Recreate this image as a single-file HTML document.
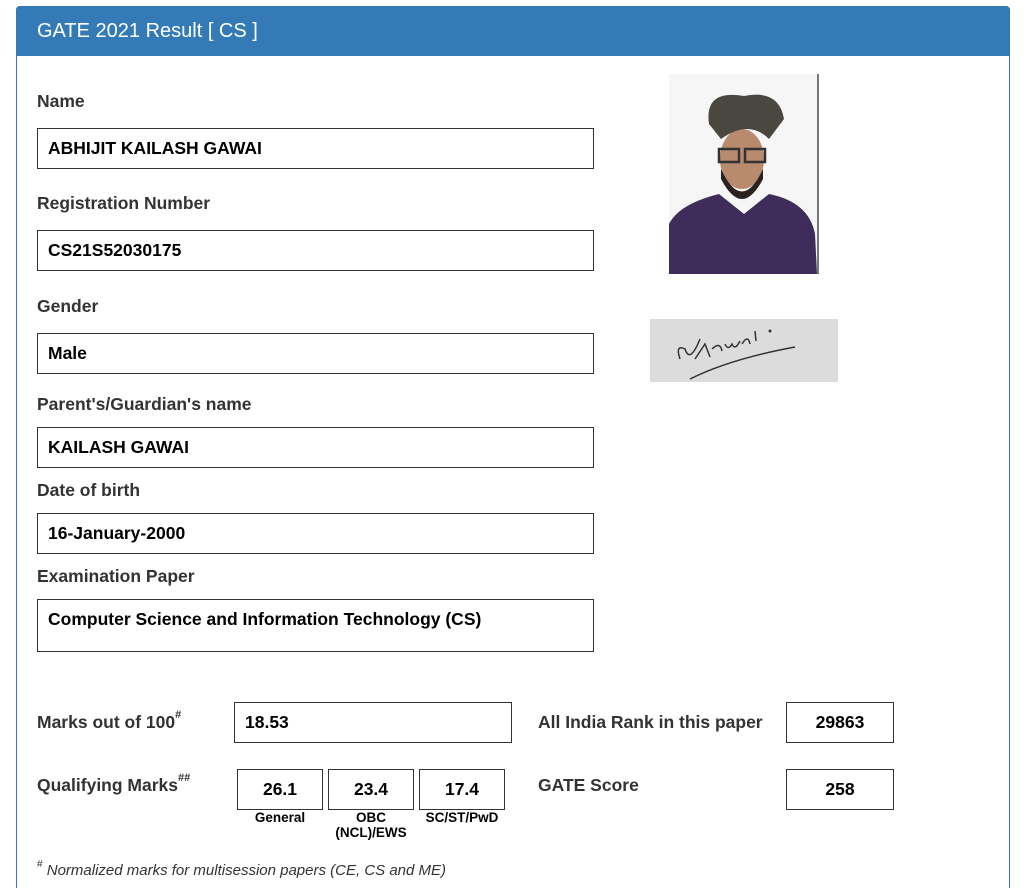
<!DOCTYPE html>
<html style="width:1033px;height:888px;overflow:hidden"><head><meta charset="utf-8"><style>
*{margin:0;padding:0;box-sizing:border-box}
body{width:1033px;height:888px;background:#fff;font-family:"Liberation Sans",Arial,sans-serif;position:relative;overflow:hidden;color:#333}
.panel{position:absolute;left:16px;top:6px;width:994px;height:900px;border:1px solid #337ab7;border-radius:4px}
.hd{position:absolute;left:16px;top:6px;width:994px;height:50px;background:#337ab7;border-radius:4px 4px 0 0;color:#fff;font-size:20px;padding:14px 0 0 21px}
.l{position:absolute;left:37px;font-size:17.5px;font-weight:bold;color:#333}
.b{position:absolute;border:1px solid #333;font-size:17.5px;font-weight:bold;color:#000;padding:9px 0 0 10px;background:#fff}
.c{text-align:center;padding-left:0}
.s{position:absolute;font-size:13.5px;font-weight:bold;color:#000;text-align:center;line-height:15px}
sup{font-size:11px;vertical-align:top;position:relative;top:-3px}
</style></head><body>
<div class="panel"></div>
<div class="hd">GATE 2021 Result [ CS ]</div>

<div class="l" style="top:91px">Name</div>
<div class="b" style="left:37px;top:128px;width:557px;height:41px">ABHIJIT KAILASH GAWAI</div>
<div class="l" style="top:193px">Registration Number</div>
<div class="b" style="left:37px;top:230px;width:557px;height:41px">CS21S52030175</div>
<div class="l" style="top:296px">Gender</div>
<div class="b" style="left:37px;top:333px;width:557px;height:41px">Male</div>
<div class="l" style="top:394px">Parent's/Guardian's name</div>
<div class="b" style="left:37px;top:427px;width:557px;height:41px">KAILASH GAWAI</div>
<div class="l" style="top:480px">Date of birth</div>
<div class="b" style="left:37px;top:513px;width:557px;height:41px">16-January-2000</div>
<div class="l" style="top:566px">Examination Paper</div>
<div class="b" style="left:37px;top:599px;width:557px;height:53px">Computer Science and Information Technology (CS)</div>

<svg style="position:absolute;left:669px;top:74px" width="150" height="200" viewBox="0 0 150 200">
<rect width="150" height="200" fill="#f6f6f6"/>
<rect x="148" y="0" width="2" height="200" fill="#777"/>
<path d="M0 200 L0 150 Q10 130 50 120 L75 140 L100 120 Q140 128 146 160 L148 200Z" fill="#3e2d5a"/>
<ellipse cx="73" cy="85" rx="22" ry="30" fill="#b88a6e"/>
<path d="M52 95 Q73 140 94 95 L94 105 Q73 145 52 105Z" fill="#2a221e"/>
<path d="M40 50 Q35 15 75 22 Q110 15 115 45 L100 65 Q80 45 52 65Z" fill="#4a4640"/>
<rect x="50" y="75" width="20" height="13" fill="none" stroke="#333" stroke-width="2.5"/>
<rect x="76" y="75" width="20" height="13" fill="none" stroke="#333" stroke-width="2.5"/>
</svg>

<svg style="position:absolute;left:650px;top:319px" width="188" height="63" viewBox="0 0 188 63">
<rect width="188" height="63" fill="#dcdcdc"/>
<path d="M30 40 Q25 25 35 30 Q40 45 50 20 M45 40 L55 25 L60 38 M62 30 Q70 22 72 32 M75 25 Q78 32 82 25 Q85 32 90 22 M92 25 Q98 15 100 25 M105 12 L106 22" fill="none" stroke="#333" stroke-width="1.5"/>
<path d="M40 60 Q80 40 145 28" fill="none" stroke="#333" stroke-width="1.5"/>
<circle cx="120" cy="12" r="1.5" fill="#333"/>
</svg>

<div class="l" style="top:712px">Marks out of 100<sup>#</sup></div>
<div class="b" style="left:234px;top:702px;width:278px;height:41px">18.53</div>
<div class="l" style="left:538px;top:712px">All India Rank in this paper</div>
<div class="b c" style="left:786px;top:702px;width:108px;height:41px">29863</div>

<div class="l" style="top:775px">Qualifying Marks<sup>##</sup></div>
<div class="b c" style="left:237px;top:769px;width:86px;height:41px">26.1</div>
<div class="b c" style="left:328px;top:769px;width:86px;height:41px">23.4</div>
<div class="b c" style="left:419px;top:769px;width:86px;height:41px">17.4</div>
<div class="s" style="left:227px;top:810px;width:106px">General</div>
<div class="s" style="left:318px;top:810px;width:106px">OBC<br>(NCL)/EWS</div>
<div class="s" style="left:409px;top:810px;width:106px">SC/ST/PwD</div>
<div class="l" style="left:538px;top:775px">GATE Score</div>
<div class="b c" style="left:786px;top:769px;width:108px;height:41px">258</div>

<div style="position:absolute;left:37px;top:862px;font-size:15px;font-style:italic;color:#333"><sup style="font-style:normal;font-size:10px">#</sup> Normalized marks for multisession papers (CE, CS and ME)</div>
</body></html>
